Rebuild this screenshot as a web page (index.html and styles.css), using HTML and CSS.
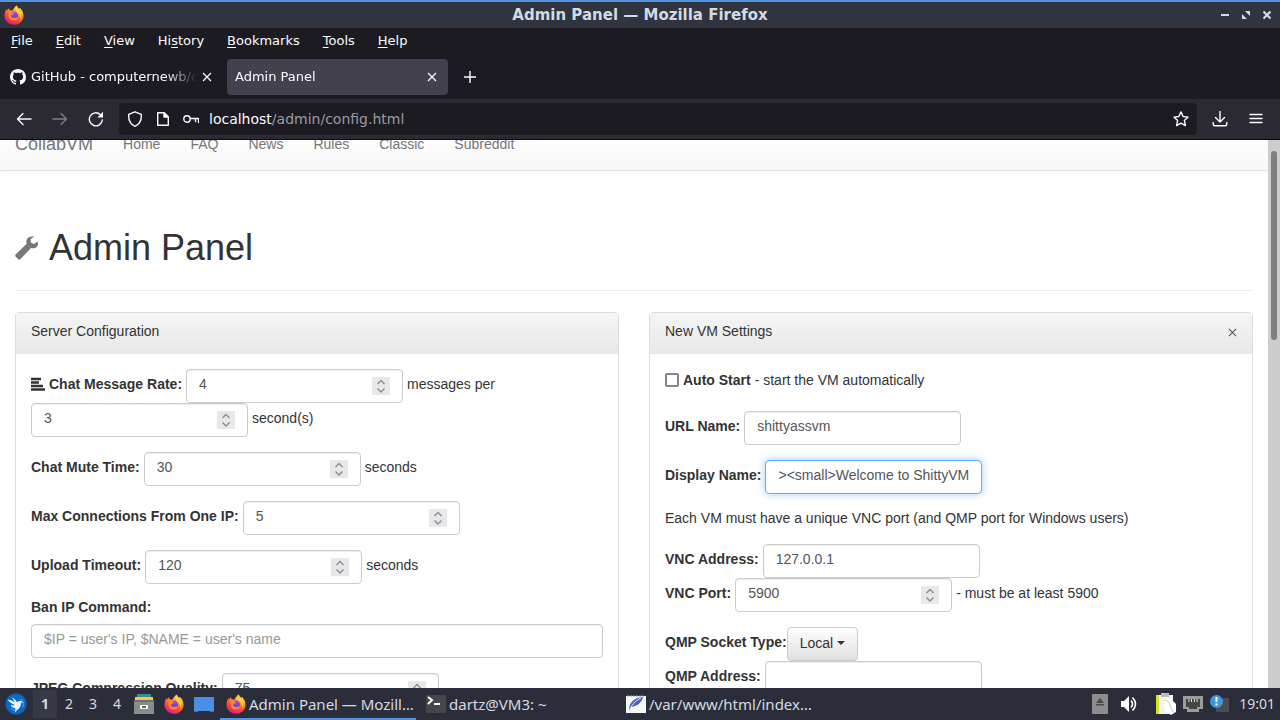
FILE: index.html
```
<!DOCTYPE html>
<html lang="en">
<head>
    <meta charset="UTF-8">
    <meta name="viewport" content="width=device-width, initial-scale=1.0">
    <title>Admin Panel</title>
    <link rel="stylesheet" href="styles.css">
</head>
<body>
    <!-- Shared icons -->
    <svg class="sprite" aria-hidden="true">
        <defs>
            <linearGradient id="fxFlame" x1="0.8" y1="0" x2="0.3" y2="1">
                <stop offset="0" stop-color="#fff14f"/>
                <stop offset="0.35" stop-color="#ffa32b"/>
                <stop offset="0.65" stop-color="#ff4a3c"/>
                <stop offset="1" stop-color="#e31587"/>
            </linearGradient>
            <linearGradient id="fxGlobe" x1="0.5" y1="0" x2="0.5" y2="1">
                <stop offset="0" stop-color="#a04cf0"/>
                <stop offset="1" stop-color="#5a3fc4"/>
            </linearGradient>
        </defs>
        <symbol id="firefox" viewBox="0 0 20 20">
            <path fill="url(#fxFlame)" d="M12.8.4c.5 1.6 1.5 2.4 2.7 3.3.3-.2.3-.6.2-1 2.1 1.7 3.8 4.6 3.8 8 0 5.2-4.2 9.1-9.4 9.1C4.800 19.800.500 15.700.500 10.500c0-2.800 1-5.100 2-6.300l.400 1.700c.600-1.200 1.500-2.200 2.300-2.700-.100.900 0 1.500.300 2 1.100-.2 2.100 0 3 .6C9.300 3.600 10.600 1.800 12.800.4z"/>
            <circle cx="9.800" cy="10.800" r="4.300" fill="url(#fxGlobe)"/>
            <path fill="#ff8a2a" d="M4.400 8.500c1.200-1.200 2.700-1.500 4.400-.9 1 .4 1.200 1.200.3 1.700-.9.400-1.900.7-2 1.600 0 1.300 1.200 2.200 2.700 2.200 1.900 0 2.700-1 4.300-.5-.8 2-2.500 3-4.500 3-3 0-5.500-2.600-5.200-7.100z"/>
            <path fill="#ffd83c" d="M12.500 1.500c.2 3 3.500 4.100 4.400 7.200.5 1.900.1 3.500-.6 4.800.2-3-.8-4.800-2.700-6.200-1.600-1.200-2.500-3.200-1.100-5.800z"/>
        </symbol>
        <symbol id="spin" viewBox="0 0 18 18">
            <rect width="18" height="18" rx="1" fill="#e8e8ea"/>
            <path d="M5.500 7L9 3.500 12.500 7M5.500 11.500L9 15l3.500-3.500" fill="none" stroke="#8c8c90" stroke-width="1.400"/>
        </symbol>
        <symbol id="cross" viewBox="0 0 10 10">
            <path d="M1 1l8 8M9 1L1 9" fill="none" stroke="currentColor" stroke-width="1.200"/>
        </symbol>
    </svg>

    <header class="browser">
        <div class="title-bar">
            <svg class="icon-20"><use href="#firefox"/></svg>
            <div class="window-title">Admin Panel — Mozilla Firefox</div>
            <div class="window-buttons">
                <button type="button" aria-label="Minimize"><svg width="10" height="10"><path d="M1 5h8" stroke="currentColor" stroke-width="2"/></svg></button>
                <button type="button" aria-label="Maximize"><svg width="10" height="10"><path d="M4 1h5v5zM1 4v5h5z" fill="currentColor"/></svg></button>
                <button type="button" aria-label="Close"><svg width="10" height="10"><path d="M1.500 1.500l7 7M8.500 1.500l-7 7" stroke="currentColor" stroke-width="2.200"/></svg></button>
            </div>
        </div>

        <nav class="menu-bar">
            <button type="button"><u>F</u>ile</button>
            <button type="button"><u>E</u>dit</button>
            <button type="button"><u>V</u>iew</button>
            <button type="button">Hi<u>s</u>tory</button>
            <button type="button"><u>B</u>ookmarks</button>
            <button type="button"><u>T</u>ools</button>
            <button type="button"><u>H</u>elp</button>
        </nav>

        <div class="tab-bar">
            <div class="tab">
                <svg width="16" height="16" viewBox="0 0 16 16"><path fill="#fbfbfe" d="M8 0C3.580 0 0 3.580 0 8c0 3.540 2.290 6.530 5.470 7.590.4.070.550-.170.550-.380 0-.190-.010-.820-.010-1.490-2.010.370-2.530-.490-2.690-.940-.090-.230-.480-.940-.820-1.130-.280-.150-.680-.520-.010-.530.630-.010 1.080.580 1.230.820.720 1.210 1.870.870 2.330.660.070-.520.280-.870.510-1.070-1.780-.2-3.640-.890-3.640-3.950 0-.870.310-1.590.820-2.150-.080-.2-.360-1.020.080-2.120 0 0 .670-.210 2.200.820.640-.180 1.320-.270 2-.270s1.360.090 2 .270c1.530-1.040 2.200-.820 2.200-.820.440 1.100.160 1.920.080 2.120.510.560.820 1.270.820 2.150 0 3.070-1.870 3.750-3.650 3.950.290.250.540.730.540 1.480 0 1.070-.010 1.930-.010 2.200 0 .210.150.460.550.380A8.010 8.010 0 0 0 16 8c0-4.420-3.580-8-8-8z"/></svg>
                <span class="tab-label">GitHub - computernewb/c</span>
                <button type="button" aria-label="Close tab"><svg class="icon-10"><use href="#cross"/></svg></button>
            </div>
            <div class="tab active">
                <span class="tab-label">Admin Panel</span>
                <button type="button" aria-label="Close tab"><svg class="icon-10"><use href="#cross"/></svg></button>
            </div>
            <button type="button" class="new-tab" aria-label="New tab"><svg width="14" height="14"><path d="M7 1v12M1 7h12" stroke="currentColor" stroke-width="1.400"/></svg></button>
        </div>

        <div class="toolbar">
            <button type="button" aria-label="Back"><svg width="16" height="16"><path d="M15 8H1.500M7 2.500L1.500 8 7 13.500"/></svg></button>
            <button type="button" aria-label="Forward" disabled><svg width="16" height="16"><path d="M1 8h13.500M9 2.500L14.500 8 9 13.500"/></svg></button>
            <button type="button" aria-label="Reload"><svg width="16" height="16"><path d="M14.300 9A6.500 6.500 0 1 1 12.300 3.600L14 5.200"/><path class="solid" d="M15 .8v5.700H9.300z"/></svg></button>
            <div class="url-bar">
                <svg width="16" height="16"><path d="M8 .8l6.300 2.500c.4 5.500-1.600 10-6.300 12C3.300 13.300 1.300 8.800 1.700 3.300z"/></svg>
                <svg width="16" height="16"><path d="M2.700 1.700h6.600l4 4v8.600H2.700zM9 2v4h4"/><path class="solid" d="M9 1.700l4.300 4.300H9z"/></svg>
                <svg class="key" width="16" height="16"><circle cx="4" cy="8" r="3.200"/><path d="M7.200 7.500h8.300v4M12.500 7.500v3"/></svg>
                <span class="url">localhost<span>/admin/config.html</span></span>
                <button type="button" aria-label="Bookmark"><svg width="16" height="16"><path d="M8 .9l2.100 4.600 5 .6-3.700 3.500 1 5L8 12.200l-4.400 2.400 1-5L.9 6.100l5-.6z"/></svg></button>
            </div>
            <button type="button" aria-label="Downloads"><svg width="16" height="16"><path d="M8 .5v10.500M3.500 6.500L8 11l4.500-4.500M1.200 11.500v1.800q0 1.500 1.500 1.500h10.600q1.500 0 1.500-1.500v-1.800"/></svg></button>
            <button type="button" aria-label="Menu"><svg width="16" height="16"><path d="M2 3.500h12M2 7.500h12M2 11.500h12"/></svg></button>
        </div>
    </header>

    <div class="viewport">
        <div class="page">
            <nav class="navbar">
                <a class="brand" href="#">CollabVM</a>
                <a href="#">Home</a>
                <a href="#">FAQ</a>
                <a href="#">News</a>
                <a href="#">Rules</a>
                <a href="#">Classic</a>
                <a href="#">Subreddit</a>
            </nav>

            <div class="page-header">
                <svg width="24" height="24" viewBox="0 0 24 24"><path fill="#777" d="M22.300 5.800l-3.500 2.300-3.100-1.700.1-3.400L19.200.8C16.400-.1 13.400.7 12 3c-.9 1.600-.9 3.200-.3 4.700L.8 18.300c-.8.8-.8 1.700 0 2.500l2.200 2.200c.8.8 1.800.8 2.500 0L16 12.100c2.100.6 4.400.2 5.900-1.400 1.400-1.400 1.400-3.500.4-4.900z"/></svg>
                <h1>Admin Panel</h1>
            </div>

            <main class="columns">
                <section class="panel">
                    <div class="panel-heading">Server Configuration</div>
                    <form class="panel-body">
                        <div class="field">
                            <svg width="14" height="14"><path d="M0 2h10M0 5.500h8M0 9h12M0 12.500h14" stroke="#333" stroke-width="2.400"/></svg>
                            <label for="chatRate">Chat Message Rate:</label>
                            <span class="number"><input type="number" id="chatRate" value="4"><svg><use href="#spin"/></svg></span>
                            <span>messages per</span>
                            <span class="number"><input type="number" id="chatSeconds" aria-label="Seconds" value="3"><svg><use href="#spin"/></svg></span>
                            <span>second(s)</span>
                        </div>
                        <div class="field">
                            <label for="muteTime">Chat Mute Time:</label>
                            <span class="number"><input type="number" id="muteTime" value="30"><svg><use href="#spin"/></svg></span>
                            <span>seconds</span>
                        </div>
                        <div class="field">
                            <label for="maxConn">Max Connections From One IP:</label>
                            <span class="number"><input type="number" id="maxConn" value="5"><svg><use href="#spin"/></svg></span>
                        </div>
                        <div class="field">
                            <label for="uploadTimeout">Upload Timeout:</label>
                            <span class="number"><input type="number" id="uploadTimeout" value="120"><svg><use href="#spin"/></svg></span>
                            <span>seconds</span>
                        </div>
                        <div class="field stacked">
                            <label for="banCommand">Ban IP Command:</label>
                            <input type="text" id="banCommand" placeholder="$IP = user's IP, $NAME = user's name">
                        </div>
                        <div class="field">
                            <label for="jpegQuality">JPEG Compression Quality:</label>
                            <span class="number"><input type="number" id="jpegQuality" value="75"><svg><use href="#spin"/></svg></span>
                        </div>
                    </form>
                </section>

                <section class="panel">
                    <div class="panel-heading">
                        New VM Settings
                        <button type="button" class="close" aria-label="Close"><svg width="9" height="9" viewBox="0 0 10 10"><use href="#cross"/></svg></button>
                    </div>
                    <form class="panel-body">
                        <div class="field check">
                            <input type="checkbox" id="autoStart">
                            <label for="autoStart">Auto Start</label>
                            <span>- start the VM automatically</span>
                        </div>
                        <div class="field">
                            <label for="urlName">URL Name:</label>
                            <input type="text" id="urlName" value="shittyassvm">
                        </div>
                        <div class="field">
                            <label for="displayName">Display Name:</label>
                            <input type="text" id="displayName" class="focused" value="&gt;&lt;small&gt;Welcome to ShittyVM">
                        </div>
                        <p>Each VM must have a unique VNC port (and QMP port for Windows users)</p>
                        <div class="field tight">
                            <label for="vncAddress">VNC Address:</label>
                            <input type="text" id="vncAddress" value="127.0.0.1">
                        </div>
                        <div class="field">
                            <label for="vncPort">VNC Port:</label>
                            <span class="number"><input type="number" id="vncPort" value="5900"><svg><use href="#spin"/></svg></span>
                            <span>- must be at least 5900</span>
                        </div>
                        <div class="field tight joined">
                            <label for="socketType">QMP Socket Type:</label>
                            <button type="button" id="socketType" class="dropdown">Local</button>
                        </div>
                        <div class="field">
                            <label for="qmpAddress">QMP Address:</label>
                            <input type="text" id="qmpAddress">
                        </div>
                    </form>
                </section>
            </main>
        </div>
        <div class="scrollbar"><div class="thumb"></div></div>
    </div>

    <footer class="taskbar">
        <button type="button" class="start" aria-label="Menu">
            <svg width="22" height="22"><circle cx="11" cy="11" r="10.500" fill="#0a68c9"/><path fill="#e8f4ff" d="M2.500 6.500c3 .3 5.500 1.500 7.500 3.200L7 4.500c2.500 1.400 4.200 3 5 5 .8-1.500 2.500-2.300 4.500-1.600l2 1.600-2.500.2c.2 3.200-1.300 5.700-4 7.300l-1.500 2.500c-.7-1.600-.7-3 0-4.300-2.500-.2-4-1.300-5-3.200 1.700.6 3.200.6 4.500 0-2.500-.8-5.500-2.500-7.500-5.500z"/><path d="M6 15c1.500 2 3 2.500 5 2M16 6c2 2 3 4.500 2 8" fill="none" stroke="#52a9f5"/></svg>
        </button>
        <div class="desktops">
            <button type="button" class="current">1</button>
            <button type="button">2</button>
            <button type="button">3</button>
            <button type="button">4</button>
        </div>
        <div class="launchers">
            <button type="button" aria-label="Files"><svg width="20" height="20"><path d="M3 0h14v3H3z" fill="#3b9187"/><path d="M1 3h18v3H1z" fill="#e7cf56"/><path d="M0 7h20v13H0z" fill="#8b8b8b"/><path d="M0 6h20v2H0z" fill="#707070"/><rect x="6" y="11" width="8" height="4" rx="1" fill="#fff"/><path d="M8 12h4v2H8z" fill="#666"/></svg></button>
            <button type="button" aria-label="Firefox"><svg class="icon-20"><use href="#firefox"/></svg></button>
            <button type="button" aria-label="Show desktop"><svg width="20" height="20"><path d="M0 3h20v15h-4v-1H4v1H0z" fill="#4a90e2"/><path d="M0 17h3v1H0zM17 17h3v1h-3z" fill="#2f6fc0"/></svg></button>
        </div>
        <div class="tasks">
            <button type="button" class="active"><svg class="icon-20"><use href="#firefox"/></svg>Admin Panel — Mozill…</button>
            <button type="button"><svg width="20" height="20"><rect y="1" width="20" height="18" rx="1" fill="#45464a"/><path d="M2 3l4 3-4 4" fill="none" stroke="#fff" stroke-width="2"/><path d="M8 10h6" stroke="#fff" stroke-width="2"/></svg>dartz@VM3: ~</button>
            <button type="button"><svg width="20" height="20"><path d="M0 2h20v17H0z" fill="#f4f7f4"/><path d="M2 3V1M5 3V1M8 3V1M11 3V1M14 3V1M17 3V1" stroke="#9ba3a8"/><path d="M3 17C3 9 7 4 17 3c-1 5-5 9-12 10z" fill="#5262b8"/><path d="M3 18C5 11 9 7 15 4" fill="none" stroke="#e6eaf8"/></svg>/var/www/html/index…</button>
        </div>
        <div class="tray">
            <svg width="16" height="20"><path d="M0 0h16v20H0z" fill="#8e8c8c"/><path d="M4 9l4-5 4 5zM4 10h8v1.500H4z" fill="#4b4b4b"/></svg>
            <svg class="volume" width="18" height="16"><path d="M1 5h3l5-5v16l-5-5H1z" fill="#fff"/><path d="M11 4.500q3 3.500 0 7M12.500 1.500q6 6.500 0 13" fill="none" stroke="#fff" stroke-width="1.600"/></svg>
            <svg width="20" height="22"><path d="M0 2h17v19H0z" fill="#f1f3ee"/><path d="M0 2h3v19H0z" fill="#d7e02c"/><path d="M5 0h8v4H5z" fill="#b9bdb9"/><path d="M8 6h7l5 5v8l-5 3-7-5z" fill="#fff"/><path d="M8 7q6 0 7 8l3 5" fill="none" stroke="#c6c9c4"/></svg>
            <svg width="20" height="18"><path d="M0 1h20v13h-4v3H4v-3H0z" fill="#9b9d9d"/><path d="M3 4h14v8h-3v2H6v-2H3z" fill="#45483f"/><path d="M6 4v3M8.500 4v3M11.500 4v3M14 4v3" stroke="#dfe2d2"/></svg>
            <svg width="20" height="20"><path d="M6 4h13v14H6z" fill="#4b4e51"/><circle cx="6.500" cy="7.500" r="6.500" fill="#3c98dc"/><path d="M6.500 3v5M6.500 9.500v2" stroke="#fff" stroke-width="2"/></svg>
            <time>19:01</time>
        </div>
    </footer>
</body>
</html>
```
FILE: styles.css
```
/* General Styles */
* {
    box-sizing: border-box;
}

body {
    margin: 0;
    height: 100vh;
    display: flex;
    flex-direction: column;
    overflow: hidden;
    font-family: "Liberation Sans", Arial, sans-serif;
    font-size: 14px;
    line-height: 20px;
    color: #333;
    background-color: #fff;
}

button {
    padding: 0;
    border: none;
    background: none;
    color: inherit;
    font: inherit;
}

svg {
    display: block;
    flex: none;
}

.sprite {
    position: absolute;
    width: 0;
    height: 0;
}

.icon-20 {
    width: 20px;
    height: 20px;
}

.icon-10 {
    width: 10px;
    height: 10px;
}

/* Browser chrome */
.browser {
    flex: none;
    background-color: #1c1b22;
    color: #fbfbfe;
    font-family: "DejaVu Sans", sans-serif;
    font-size: 13px;
    border-bottom: 1px solid #0c0c0d;
}

.title-bar {
    display: flex;
    align-items: center;
    height: 28px;
    padding: 0 8px 0 4px;
    background-color: #2f343f;
    border-top: 2px solid #5294e2;
    color: #d3dae3;
}

.window-title {
    flex: 1;
    padding-left: 36px;
    text-align: center;
    font-size: 15px;
    font-weight: bold;
}

.window-buttons {
    display: flex;
    gap: 11px;
}

.menu-bar {
    display: flex;
    gap: 23px;
    height: 28px;
    padding: 0 11px 2px;
}

.menu-bar u {
    text-underline-offset: 2px;
}

.tab-bar {
    display: flex;
    align-items: center;
    height: 43px;
    padding-bottom: 1px;
    gap: 3px;
}

.tab {
    display: flex;
    align-items: center;
    gap: 5px;
    width: 224px;
    height: 36px;
    padding: 0 12px 0 10px;
}

.tab.active {
    width: 221px;
    padding: 0 11px 0 8px;
    border-radius: 4px;
    background-color: #42414d;
}

.tab-label {
    flex: 1;
    overflow: hidden;
    white-space: nowrap;
    -webkit-mask-image: linear-gradient(to left, transparent, #000 32px);
    mask-image: linear-gradient(to left, transparent, #000 32px);
}

.new-tab {
    margin-left: 12px;
}

.toolbar {
    display: flex;
    align-items: center;
    gap: 20px;
    height: 40px;
    padding: 0 16px;
    background-color: #2b2a33;
}

.toolbar svg {
    fill: none;
    stroke: #fbfbfe;
    stroke-width: 1.4;
    stroke-linejoin: round;
    stroke-linecap: round;
}

.toolbar .solid {
    fill: #fbfbfe;
    stroke: none;
}

.toolbar button:disabled {
    opacity: 0.4;
}

.url-bar {
    flex: 1;
    display: flex;
    align-items: center;
    gap: 12px;
    height: 32px;
    margin-left: -5px;
    margin-right: -5px;
    padding: 0 8px;
    border-radius: 4px;
    background-color: #1c1b22;
    font-size: 14px;
}

.url {
    flex: 1;
    margin-left: -2px;
}

.url span {
    color: #9a9aa2;
}

/* Web page */
.viewport {
    flex: 1;
    display: flex;
    min-height: 0;
    overflow: hidden;
}

.page {
    flex: 1;
    margin-top: -20px;
}

.scrollbar {
    width: 12px;
    padding: 11px 3px;
    background-color: #cdcdcd;
}

.thumb {
    height: 36%;
    border-radius: 3px;
    background-color: #7d8080;
}

.navbar {
    display: flex;
    height: 51px;
    background-image: linear-gradient(#fff, #f8f8f8);
    border-bottom: 1px solid #e7e7e7;
    box-shadow: 0 1px 3px rgba(0, 0, 0, 0.05);
}

.navbar a {
    padding: 14px 15px;
    color: #777;
    text-decoration: none;
}

.navbar .brand {
    font-size: 18px;
}

.page-header {
    display: flex;
    gap: 10px;
    margin: 57px 15px 21px;
    padding-bottom: 22px;
    border-bottom: 1px solid #eee;
}

.page-header svg {
    margin-top: 8px;
}

h1 {
    margin: 0;
    font-size: 36px;
    font-weight: normal;
    line-height: 40px;
}

.columns {
    display: grid;
    grid-template-columns: 1fr 1fr;
    gap: 30px;
    padding: 0 15px;
}

.panel {
    border: 1px solid #ddd;
    border-radius: 4px;
}

.panel-heading {
    display: flex;
    justify-content: space-between;
    height: 41px;
    padding: 8px 15px;
    background-image: linear-gradient(#f5f5f5, #e8e8e8);
}

.close {
    height: 22px;
    color: #555;
}

.panel-body {
    padding: 15px;
}

.field {
    display: flex;
    flex-wrap: wrap;
    align-items: center;
    column-gap: 4px;
    margin-bottom: 15px;
}

.field.tight {
    margin-bottom: 0;
}

.field.joined {
    column-gap: 0;
}

.field.check {
    height: 27px;
    padding-bottom: 1px;
}

.field label,
.field > span:not(.number) {
    padding-bottom: 4px;
}

.field > svg {
    margin-bottom: 4px;
}

label {
    font-weight: bold;
}

p {
    margin: 0 0 15px;
    padding-bottom: 2px;
    line-height: 18px;
}

input[type="text"],
input[type="number"] {
    width: 217px;
    height: 34px;
    padding: 4px 12px 8px;
    border: 1px solid #ccc;
    border-radius: 4px;
    background-color: #fff;
    box-shadow: inset 0 1px 1px rgba(0, 0, 0, 0.075);
    color: #555;
    font: inherit;
}

input::placeholder {
    color: #999;
}

input[type="text"].focused {
    border-color: #66afe9;
    box-shadow: inset 0 1px 1px rgba(0, 0, 0, 0.075), 0 0 8px rgba(102, 175, 233, 0.6);
}

input[type="number"] {
    appearance: textfield;
}

input::-webkit-inner-spin-button {
    display: none;
}

input[type="checkbox"] {
    appearance: none;
    width: 14px;
    height: 14px;
    margin: 0 0 4px;
    border: 2px solid #84848a;
    border-radius: 2px;
}

.number {
    position: relative;
}

.number svg {
    position: absolute;
    top: 8px;
    right: 13px;
    width: 18px;
    height: 18px;
}

.field.stacked {
    flex-direction: column;
    align-items: stretch;
}

.stacked label {
    margin-top: -2px;
    margin-bottom: 3px;
}

.stacked input[type="text"] {
    width: 100%;
}

.dropdown {
    display: flex;
    align-items: center;
    gap: 4px;
    height: 34px;
    padding: 0 12px 2px;
    border: 1px solid #ccc;
    border-radius: 4px;
    background-image: linear-gradient(#fff, #e0e0e0);
}

.dropdown::after {
    content: "";
    border: 4px solid transparent;
    border-top-color: #333;
    border-bottom: 0;
}

/* Taskbar */
.taskbar {
    flex: none;
    display: flex;
    align-items: center;
    height: 32px;
    padding: 0 5px;
    background-color: #2b2e3a;
    color: #d3dae3;
    font-family: "Noto Sans", sans-serif;
    font-size: 15px;
}

.desktops {
    display: flex;
    margin-left: 6px;
}

.desktops button {
    width: 24px;
    height: 28px;
    font-size: 14px;
}

.desktops .current {
    background-color: #353845;
    font-weight: bold;
}

.launchers {
    display: flex;
    gap: 10px;
    margin: 0 6px 0 5px;
}

.tasks {
    flex: 1;
    display: flex;
    gap: 4px;
}

.tasks button {
    display: flex;
    align-items: center;
    gap: 3px;
    width: 196px;
    height: 32px;
    padding-left: 6px;
    white-space: nowrap;
}

.tasks .active {
    box-shadow: inset 0 -2px #5294e2;
}

.tray {
    display: flex;
    align-items: center;
    gap: 7px;
}

.tray .volume {
    margin: 0 11px 0 5px;
}

.tray time {
    margin-left: 2px;
    font-size: 14px;
}
```
